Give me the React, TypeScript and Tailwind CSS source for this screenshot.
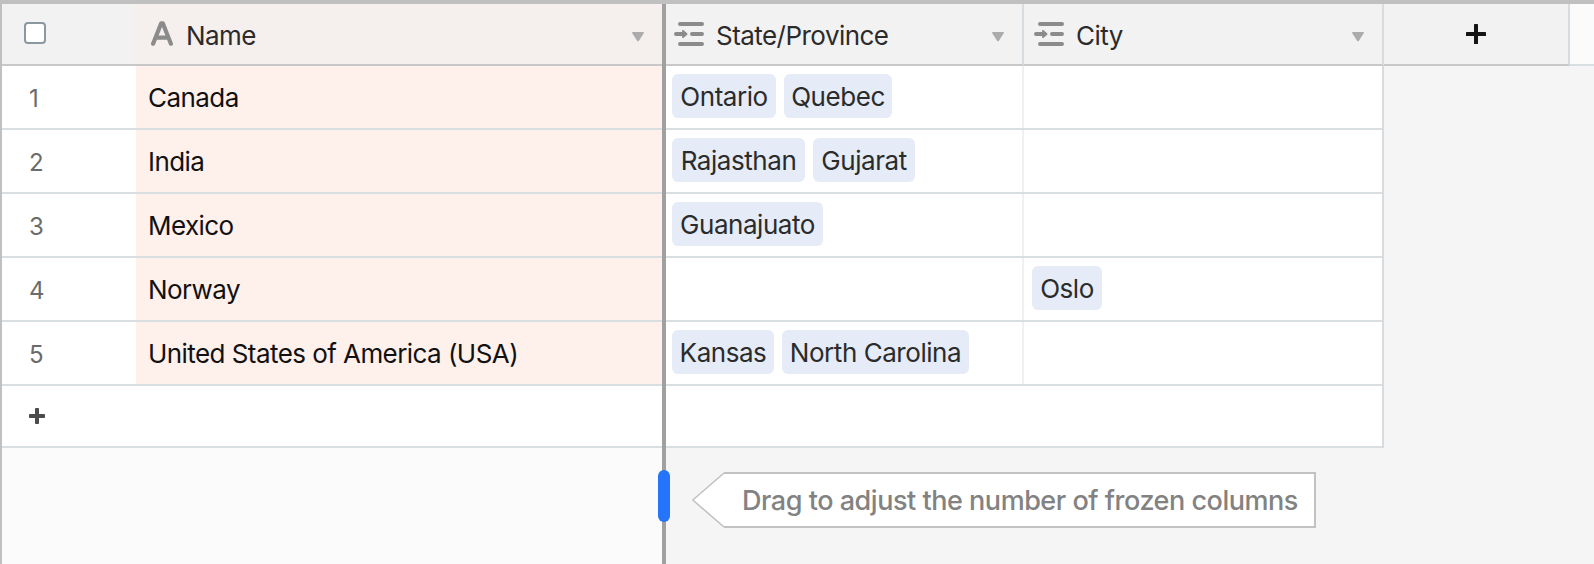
import React from 'react';
import clsx from 'clsx';

interface Linked {
  label: string;
  width: string;
}

interface Country {
  id: number;
  name: string;
  states: Linked[];
  cities: Linked[];
}

const countries: Country[] = [
  {
    id: 1,
    name: 'Canada',
    states: [
      { label: 'Ontario', width: 'w-[104px]' },
      { label: 'Quebec', width: 'w-[108px]' }
    ],
    cities: []
  },
  {
    id: 2,
    name: 'India',
    states: [
      { label: 'Rajasthan', width: 'w-[133px]' },
      { label: 'Gujarat', width: 'w-[102px]' }
    ],
    cities: []
  },
  {
    id: 3,
    name: 'Mexico',
    states: [{ label: 'Guanajuato', width: 'w-[151px]' }],
    cities: []
  },
  {
    id: 4,
    name: 'Norway',
    states: [],
    cities: [{ label: 'Oslo', width: 'w-[70px]' }]
  },
  {
    id: 5,
    name: 'United States of America (USA)',
    states: [
      { label: 'Kansas', width: 'w-[102px]' },
      { label: 'North Carolina', width: 'w-[187px]' }
    ],
    cities: []
  }
];

const TextIcon: React.FC = () => (
  <svg width="24" height="26" viewBox="0 0 24 26" fill="none" stroke="#8b8b8b" strokeWidth="4.2" strokeLinecap="round" strokeLinejoin="round">
    <path d="M3.1 23.7 11.2 3.3h1.6l8.1 20.4M6.2 17.6h11.6" />
  </svg>
);

const LinkIcon: React.FC = () => (
  <svg width="30" height="24" viewBox="0 0 30 24" fill="none" stroke="#8b8b8b" strokeWidth="4" strokeLinecap="round">
    <path d="M6 2h22M6 22h22M18 12h10M2 12h7" />
    <path d="M9 8.8v6.4L12.6 12z" fill="#8b8b8b" strokeWidth="1.8" strokeLinejoin="round" />
  </svg>
);

const Caret: React.FC = () => (
  <svg width="12" height="10" viewBox="0 0 12 10" fill="#acacac">
    <path d="M.8 0h10.4q1.2.4.4 1.5L6.9 8.7q-.9 1-1.8 0L.4 1.5Q-.4.4.8 0z" />
  </svg>
);

const Pills: React.FC<{ items: Linked[] }> = ({ items }) => (
  <div className="flex gap-2">
    {items.map((item) => (
      <span
        key={item.label}
        className={clsx(
          'flex h-11 items-center justify-center whitespace-nowrap rounded-md bg-[#e5ebf7] pt-0.5 text-[26px] tracking-[-0.45px] text-[#2b2b2b]',
          item.width
        )}
      >
        {item.label}
      </span>
    ))}
  </div>
);

const App: React.FC = () => {
  return (
    <div
      className="flex h-[564px] w-[1594px] overflow-hidden border-l-2 border-t-4 border-[#c0c0c0] bg-[#f5f5f5] text-[26px] font-[420] leading-8"
      style={{ fontFamily: 'Inter, "Liberation Sans", sans-serif' }}
    >
      {/* Frozen columns */}
      <div className="flex w-[660px] shrink-0 flex-col bg-[#fbfbfb]">
        <div className="flex h-[62px] border-b-2 border-[#c8c8c8] bg-[#f2f2f2]">
          <div className="w-[132px] pl-[22px] pt-[18px]">
            <div className="h-[22px] w-[22px] rounded-[4px] border-2 border-[#8b989f] bg-white" />
          </div>
          <div className="flex flex-1 bg-[#f5efee] pl-4 pr-[18px] text-[#2b2b2b]">
            <div className="pt-4">
              <TextIcon />
            </div>
            <span className="ml-3 mt-4 flex-1 tracking-[-0.6px]">Name</span>
            <div className="pt-7">
              <Caret />
            </div>
          </div>
        </div>
        {countries.map((country) => (
          <div key={country.id} className="flex h-16 border-b-2 border-[#d9dee1] bg-white">
            <div className="w-[134px] pl-[27px] pt-[17px] text-2xl leading-8 text-[#6b6b6b]">{country.id}</div>
            <div className="flex-1 whitespace-nowrap bg-[#fef0eb] pl-3 pt-4 tracking-[-0.56px] text-[#111]">
              {country.name}
            </div>
          </div>
        ))}
        <div className="h-[62px] border-b-2 border-[#d9dee1] bg-white pl-[27px] pt-[22px]">
          <svg width="16" height="16" viewBox="0 0 16 16" fill="#4b4b4b">
            <rect x="6" width="4" height="16" rx="0.8" />
            <rect y="6" width="16" height="4" rx="0.8" />
          </svg>
        </div>
      </div>

      {/* Freeze divider with its drag handle */}
      <div className="relative z-10 w-1 shrink-0 bg-[#a0a0a0]">
        <div className="absolute -left-1 top-[466px] h-[52px] w-3 rounded-full bg-[#2574fb]" />
      </div>

      {/* Scrolling columns */}
      <div className="flex flex-1 flex-col">
        <div className="flex h-[62px] text-[#2b2b2b]">
          <div className="flex w-[358px] border-b-2 border-r-2 border-b-[#c8c8c8] border-r-[#d6dce0] bg-[#f2f2f2] pl-2 pr-[18px]">
            <div className="pt-[18px]">
              <LinkIcon />
            </div>
            <span className="ml-3 mt-4 flex-1 tracking-[-0.54px]">State/Province</span>
            <div className="pt-7">
              <Caret />
            </div>
          </div>
          <div className="flex w-[360px] border-b-2 border-r-2 border-b-[#c8c8c8] border-r-[#d6dce0] bg-[#f2f2f2] pl-2.5 pr-[18px]">
            <div className="pt-[18px]">
              <LinkIcon />
            </div>
            <span className="ml-3 mt-4 flex-1 tracking-[-0.5px]">City</span>
            <div className="pt-7">
              <Caret />
            </div>
          </div>
          <div className="flex w-[186px] justify-center border-b-2 border-r-2 border-b-[#c8c8c8] border-r-[#d6dce0] bg-[#f2f2f2] pt-5">
            <svg width="20" height="20" viewBox="0 0 20 20" fill="#151515">
              <rect x="8" width="4" height="20" rx="0.6" />
              <rect y="8" width="20" height="4" rx="0.6" />
            </svg>
          </div>
          <div className="flex-1 border-b-2 border-[#d9dee1] bg-[#fbfbfb]" />
        </div>
        <div className="w-[718px] border-r-2 border-[#d6dce0] bg-white">
          {countries.map((country) => (
            <div key={country.id} className="flex h-16 border-b-2 border-[#d9dee1]">
              <div className="w-[358px] border-r-2 border-[#f0f0f0] pl-1.5 pt-2">
                <Pills items={country.states} />
              </div>
              <div className="flex-1 pl-2 pt-2">
                <Pills items={country.cities} />
              </div>
            </div>
          ))}
          <div className="h-[62px] border-b-2 border-[#d9dee1]" />
        </div>

        {/* Hint */}
        <div className="ml-[26px] mt-6 flex h-14">
          <svg width="32" height="56" viewBox="0 0 32 56" fill="white" stroke="#c2c2c2">
            <path d="M32 1 .8 28 32 55" strokeWidth="1.6" />
          </svg>
          <div className="flex w-[592px] items-center whitespace-nowrap border-y-2 border-r-2 border-[#c2c2c2] bg-white pl-[18px] pt-0.5 text-[27px] font-medium tracking-[-0.47px] text-[#828282]">
            Drag to adjust the number of frozen columns
          </div>
        </div>
      </div>
    </div>
  );
};

export default App;
